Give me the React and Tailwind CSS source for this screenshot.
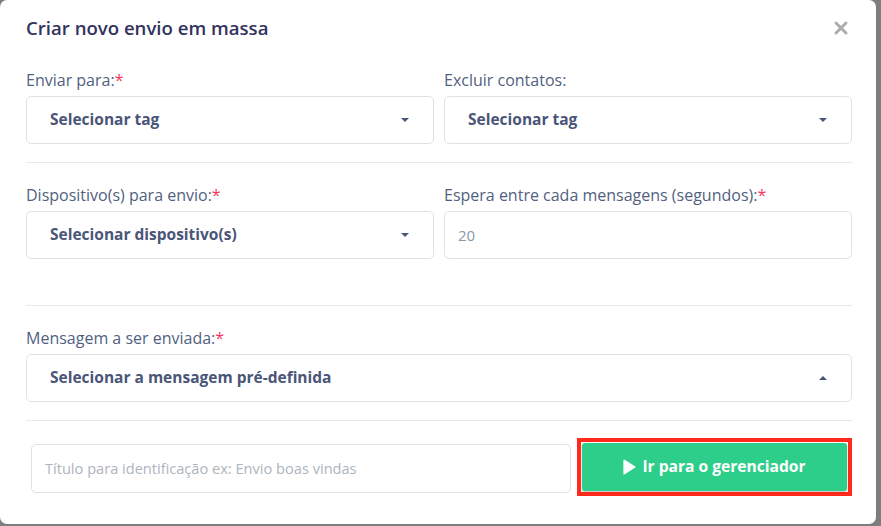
import { X } from 'lucide-react'

function Caret({ up = false }) {
  return (
    <svg width="8" height="4" viewBox="0 0 8 4" className="shrink-0">
      {up ? (
        <path d="M0 4 L4 0 L8 4 Z" fill="#4a5578" />
      ) : (
        <path d="M0 0 L8 0 L4 4 Z" fill="#4a5578" />
      )}
    </svg>
  )
}

function Label({ children, required }) {
  return (
    <div className="mb-[4px] h-[24px] text-[16px] leading-[24px] text-[#525f7f]">
      {children}
      {required && <span className="text-[#f5365c]">*</span>}
    </div>
  )
}

function Select({ text, up }) {
  return (
    <div className="flex h-[48px] items-center justify-between rounded-[5px] border border-[#dee2e6] bg-white pl-[23px] pr-[24px]">
      <span className="text-[15.5px] font-bold text-[#4a5578]">{text}</span>
      <Caret up={up} />
    </div>
  )
}

export default function App() {
  return (
    <div
      className="h-[526px] w-[881px] overflow-hidden bg-[#7d7d7d]"
      style={{ fontFamily: '"Open Sans", "Noto Sans", sans-serif' }}
    >
      <div className="h-[524px] w-[876px] rounded-[7px] bg-white px-[26px] pr-[24px]">
        <div className="flex h-[54px] items-center justify-between pt-[1px]">
          <h1 className="text-[18.6px] font-semibold text-[#32325d]">Criar novo envio em massa</h1>
          <X size={20} strokeWidth={3.5} className="mr-[1px] text-[#acacac]" />
        </div>

        <div className="mt-[14px] grid grid-cols-2 gap-x-[10px]">
          <div>
            <Label required>Enviar para:</Label>
            <Select text="Selecionar tag" />
          </div>
          <div>
            <Label>Excluir contatos:</Label>
            <Select text="Selecionar tag" />
          </div>
        </div>

        <div className="mt-[18px] border-t border-[#e6e8ec]" />

        <div className="mt-[20px] grid grid-cols-2 gap-x-[10px]">
          <div>
            <Label required>Dispositivo(s) para envio:</Label>
            <Select text="Selecionar dispositivo(s)" />
          </div>
          <div>
            <Label required>Espera entre cada mensagens (segundos):</Label>
            <div className="flex h-[48px] items-center rounded-[5px] border border-[#dee2e6] bg-white px-[13px] text-[15px] text-[#8898aa]">
              20
            </div>
          </div>
        </div>

        <div className="mt-[46px] border-t border-[#e6e8ec]" />

        <div className="mt-[20px]">
          <Label required>Mensagem a ser enviada:</Label>
          <Select text="Selecionar a mensagem pré-definida" up />
        </div>

        <div className="mt-[18px] border-t border-[#e6e8ec]" />

        <div className="mt-[17px] flex items-start gap-[6px] pl-[5px]">
          <div className="mt-[6px] flex h-[49px] flex-1 items-center rounded-[5px] border border-[#dee2e6] px-[13px] text-[14.6px] text-[#adb5bd]">
            Título para identificação ex: Envio boas vindas
          </div>
          <div className="w-[275px] border-[4px] border-[#ff2a1a] p-[1px]">
            <button className="flex h-[48px] w-full items-center justify-center gap-[6px] rounded-[3px] bg-[#2dce89] text-[15.6px] font-bold text-white shadow-[0_1px_2px_rgba(0,0,0,0.25)]">
              <svg width="13" height="16" viewBox="0 0 13 16" className="shrink-0">
                <path d="M1 1 L12 8 L1 15 Z" fill="white" stroke="white" strokeWidth="1.2" strokeLinejoin="round" />
              </svg>
              Ir para o gerenciador
            </button>
          </div>
        </div>
      </div>
    </div>
  )
}
